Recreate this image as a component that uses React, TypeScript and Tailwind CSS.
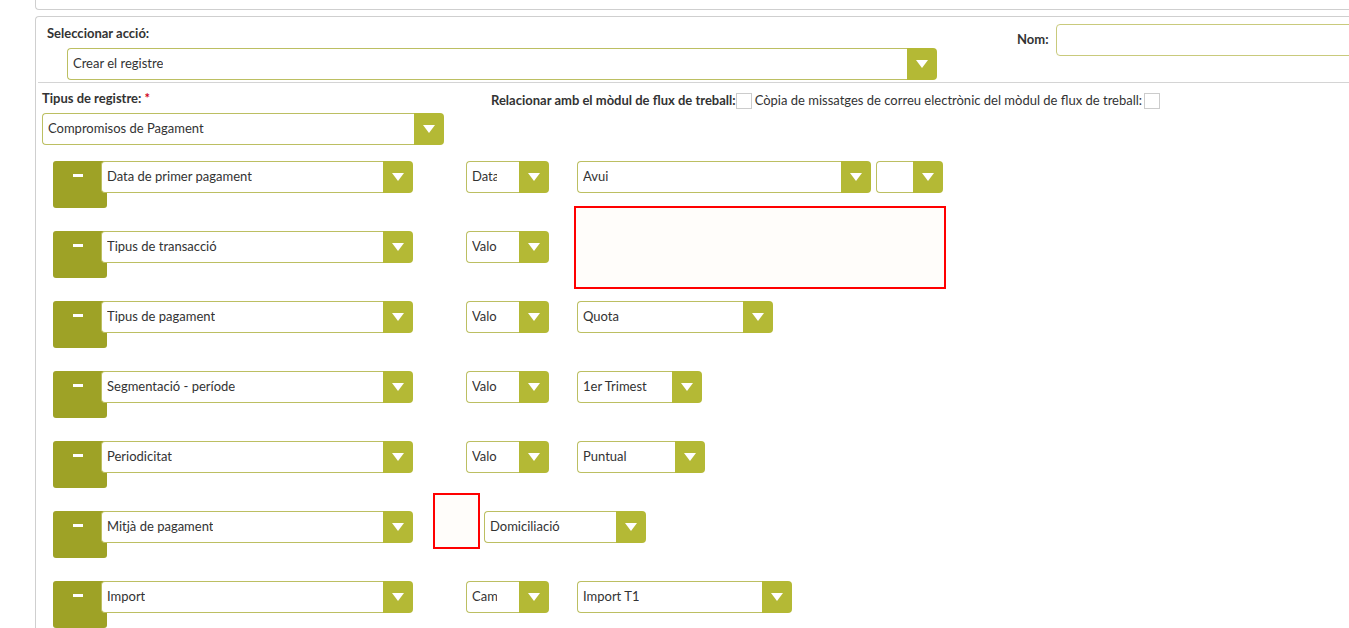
import React from "react";

const FONT = { fontFamily: "Lato, 'Open Sans', sans-serif" };

function Arrow() {
  return (
    <svg width="12" height="8" viewBox="0 0 12 8">
      <path d="M0 0h12L6 8z" fill="#ffffff" />
    </svg>
  );
}

interface SelectProps {
  text: string;
  w: string;
  clip?: string;
}

function Select({ text, w, clip }: SelectProps) {
  return (
    <div className={`flex h-[32px] shrink-0 ${w}`}>
      <div className="flex min-w-0 flex-1 items-center rounded-l-[4px] border-y border-l border-[#bcbf62] bg-white pl-[5px]">
        <span
          className={`overflow-hidden whitespace-nowrap text-[13px] text-[#333] ${clip ?? ""}`}
        >
          {text}
        </span>
      </div>
      <div className="flex w-[30px] shrink-0 items-center justify-center rounded-r-[4px] bg-[#b4b935]">
        <Arrow />
      </div>
    </div>
  );
}

function FieldRow({ label, children }: { label: string; children: React.ReactNode }) {
  return (
    <div className="flex h-[47px] items-start">
      <div className="h-[47px] w-[54px] shrink-0 rounded-[3px] bg-[#9ea226]">
        <div className="ml-[20px] mt-[13px] h-[3px] w-[10px] bg-white" />
      </div>
      <div className="z-10 -ml-[6px]">
        <Select text={label} w="w-[312px]" />
      </div>
      {children}
    </div>
  );
}

export default function App() {
  return (
    <div className="h-[628px] w-[1349px] overflow-hidden bg-white pl-[35px]" style={FONT}>
      <div className="h-[10px] rounded-bl-[4px] border-b border-l border-[#cfcfcf]" />

      <div className="mt-[6px] h-[700px] rounded-tl-[4px] border-l border-t border-[#cfcfcf]">
        {/* action */}
        <div className="ml-[2px] flex h-[66px] items-start border-b border-[#d4d4d4]">
          <div className="flex w-[901px] shrink-0 flex-col pl-[9px] pt-[9px]">
            <div className="text-[13px] font-bold leading-[15px] text-[#333]">Seleccionar acció:</div>
            <div className="ml-[20px] mt-[7px]">
              <Select text="Crear el registre" w="w-[870px]" />
            </div>
          </div>
          <div className="ml-[78px] flex items-center gap-[7px] pt-[7px]">
            <span className="text-[13px] font-bold text-[#333]">Nom:</span>
            <div className="h-[32px] w-[320px] rounded-[4px] border border-[#c9ca7c] bg-white" />
          </div>
        </div>

        {/* register type */}
        <div className="flex items-start">
          <div className="flex w-[408px] shrink-0 flex-col pl-[6px] pt-[8px]">
            <div className="text-[13px] font-bold leading-[15px] text-[#333]">
              Tipus de registre: <span className="text-[#d0021b]">*</span>
            </div>
            <div className="mt-[7px]">
              <Select text="Compromisos de Pagament" w="w-[402px]" />
            </div>
          </div>
          <div className="ml-[47px] mt-[10px] flex h-[16px] items-center text-[13px] text-[#333]">
            <span className="font-bold">Relacionar amb el mòdul de flux de treball:</span>
            <span className="h-[16px] w-[16px] border border-[#cccccc] bg-white" />
            <span className="ml-[3px]">Còpia de missatges de correu electrònic del mòdul de flux de treball:</span>
            <span className="ml-[2px] h-[16px] w-[16px] border border-[#cccccc] bg-white" />
          </div>
        </div>

        {/* rows */}
        <div className="mt-[16px] flex flex-col gap-[23px] pl-[17px]">
          <FieldRow label="Data de primer pagament">
            <div className="ml-[53px]">
              <Select text="Data" w="w-[83px]" clip="w-[25px]" />
            </div>
            <div className="ml-[28px]">
              <Select text="Avui" w="w-[294px]" />
            </div>
            <div className="ml-[5px]">
              <Select text="" w="w-[67px]" />
            </div>
          </FieldRow>

          <FieldRow label="Tipus de transacció">
            <div className="ml-[53px]">
              <Select text="Valor" w="w-[83px]" clip="w-[25px]" />
            </div>
            <div className="-mt-[25px] ml-[25px] h-[83px] w-[372px] border-2 border-[#ff0000] bg-[#fffdfa]" />
          </FieldRow>

          <FieldRow label="Tipus de pagament">
            <div className="ml-[53px]">
              <Select text="Valor" w="w-[83px]" clip="w-[25px]" />
            </div>
            <div className="ml-[28px]">
              <Select text="Quota" w="w-[196px]" />
            </div>
          </FieldRow>

          <FieldRow label="Segmentació - període">
            <div className="ml-[53px]">
              <Select text="Valor" w="w-[83px]" clip="w-[25px]" />
            </div>
            <div className="ml-[28px]">
              <Select text="1er Trimestre" w="w-[125px]" clip="w-[64px]" />
            </div>
          </FieldRow>

          <FieldRow label="Periodicitat">
            <div className="ml-[53px]">
              <Select text="Valor" w="w-[83px]" clip="w-[25px]" />
            </div>
            <div className="ml-[28px]">
              <Select text="Puntual" w="w-[128px]" />
            </div>
          </FieldRow>

          <FieldRow label="Mitjà de pagament">
            <div className="-mt-[18px] ml-[20px] h-[56px] w-[47px] border-2 border-[#ff0000] bg-[#fffdfa]" />
            <div className="ml-[4px]">
              <Select text="Domiciliació" w="w-[162px]" />
            </div>
          </FieldRow>

          <FieldRow label="Import">
            <div className="ml-[53px]">
              <Select text="Camp" w="w-[83px]" clip="w-[25px]" />
            </div>
            <div className="ml-[28px]">
              <Select text="Import T1" w="w-[215px]" />
            </div>
          </FieldRow>
        </div>
      </div>
    </div>
  );
}
